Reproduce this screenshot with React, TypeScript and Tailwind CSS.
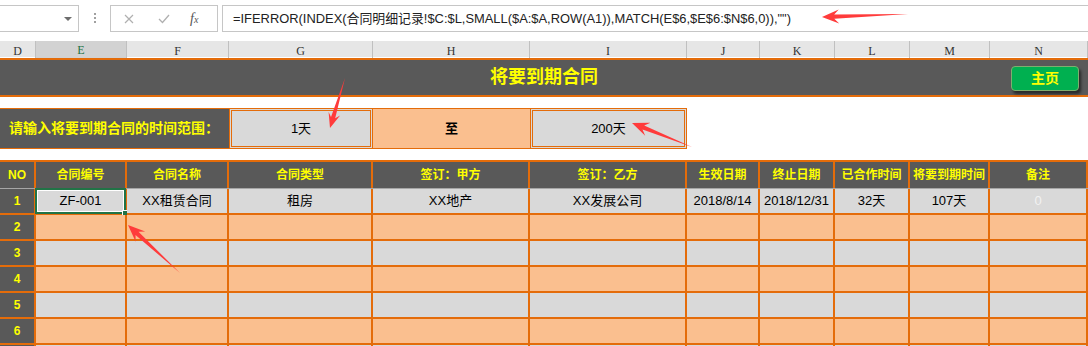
import React from "react";

const cols = [36, 91, 102, 144, 157, 157, 73, 75, 75, 80, 98];
const letters = ["D", "E", "F", "G", "H", "I", "J", "K", "L", "M", "N"];
const heads = ["NO", "合同编号", "合同名称", "合同类型", "签订：甲方", "签订：乙方", "生效日期", "终止日期", "已合作时间", "将要到期时间", "备注"];
const row1 = ["ZF-001", "XX租赁合同", "租房", "XX地产", "XX发展公司", "2018/8/14", "2018/12/31", "32天", "107天", "0"];

const gridCols = "grid grid-cols-[36px_91px_102px_144px_157px_157px_73px_75px_75px_80px_98px]";

function arrowPoints(tx: number, ty: number, sx: number, sy: number, H = 17, W = 7) {
  const dx = tx - sx;
  const dy = ty - sy;
  const len = Math.hypot(dx, dy);
  const ux = dx / len;
  const uy = dy / len;
  const px = -uy;
  const py = ux;
  const b = H * 0.72;
  const pts = [
    [sx, sy],
    [tx - ux * b + px * 2.2, ty - uy * b + py * 2.2],
    [tx - ux * H + px * W, ty - uy * H + py * W],
    [tx, ty],
    [tx - ux * H - px * W, ty - uy * H - py * W],
    [tx - ux * b - px * 2.2, ty - uy * b - py * 2.2],
  ];
  return pts.map((p) => p[0].toFixed(1) + "," + p[1].toFixed(1)).join(" ");
}

function FormulaBar() {
  return (
    <div className="flex h-[41px] items-start pt-[5px] bg-white">
      <div className="relative h-[27px] w-[79px] border-y border-r border-[#c6c6c6] bg-white">
        <div className="absolute left-[64px] top-[11px] h-0 w-0 border-x-[4px] border-t-[4px] border-x-transparent border-t-[#6d6d6d]" />
      </div>
      <div className="flex w-[31px] flex-col items-center gap-[2px] pt-[8px]">
        <span className="h-[2px] w-[2px] bg-[#a0a0a0]" />
        <span className="h-[2px] w-[2px] bg-[#a0a0a0]" />
        <span className="h-[2px] w-[2px] bg-[#a0a0a0]" />
      </div>
      <div className="flex h-[27px] w-[108px] items-center border border-[#c6c6c6] bg-white text-[#b5b5b5]">
        <svg className="ml-[13px]" width="10" height="10" viewBox="0 0 10 10">
          <path d="M1 1L9 9M9 1L1 9" stroke="#b0b0b0" strokeWidth="1.2" fill="none" />
        </svg>
        <svg className="ml-[24px]" width="12" height="10" viewBox="0 0 12 10">
          <path d="M1 5L4.5 8.5L11 1" stroke="#b0b0b0" strokeWidth="1.3" fill="none" />
        </svg>
        <span className="ml-[20px] font-['Liberation_Serif',serif] text-[14px] italic text-[#555]">
          f<span className="text-[10px]">x</span>
        </span>
      </div>
      <div className="ml-[4px] flex h-[27px] flex-1 items-center border-y border-l border-[#c6c6c6] bg-white pl-[10px] text-[12.9px] text-[#222] whitespace-nowrap">
        =IFERROR(INDEX(合同明细记录!$C:$L,SMALL($A:$A,ROW(A1)),MATCH(E$6,$E$6:$N$6,0)),"")
      </div>
    </div>
  );
}

function ColumnLetters() {
  return (
    <div className={gridCols + " h-[16px] bg-[#e6e6e6]"}>
      {letters.map((l, i) => (
        <div
          key={l}
          className={
            "flex items-center justify-center border-r border-[#c0c0c0] font-['Liberation_Serif',serif] text-[12px] " +
            (i === 1 ? "bg-[#d2d2d2] border-b-2 border-b-[#217346] text-[#217346]" : "text-[#333]")
          }
        >
          {l}
        </div>
      ))}
    </div>
  );
}

export default function App() {
  return (
    <div className="relative h-[346px] w-[1088px] overflow-hidden bg-white font-['Liberation_Sans','Noto_Sans_CJK_SC',sans-serif]">
      <FormulaBar />
      <ColumnLetters />

      {/* title */}
      <div className="relative mt-[1px] flex h-[39px] items-center justify-center border-y-2 border-[#e46c0a] bg-[#595959]">
        <span className="text-[18px] font-bold text-[#ffff00]">将要到期合同</span>
        <div className="absolute right-[9px] top-[6px] flex h-[25px] w-[68px] items-center justify-center rounded-[4px] border border-[#7fae6f] bg-[#00b050] text-[14px] font-bold text-[#ffff00] shadow-[2px_3px_3px_rgba(0,0,0,0.55)]">
          主页
        </div>
      </div>

      {/* range input */}
      <div className="mt-[11px] flex h-[41px]">
        <div className="flex w-[229px] items-center border-y border-[#e46c0a] bg-[#595959] pl-[9px] text-[14px] font-bold text-[#ffff00]">
          请输入将要到期合同的时间范围：
        </div>
        <div className="flex w-[144px] items-center justify-center border-[3px] border-double border-[#e46c0a] bg-[#d9d9d9] text-[13px] text-black">
          1天
        </div>
        <div className="flex w-[157px] items-center justify-center border-y border-[#e46c0a] bg-[#fabf8f] text-[13px] font-bold text-black">
          至
        </div>
        <div className="flex w-[157px] items-center justify-center border-[3px] border-double border-[#e46c0a] bg-[#d9d9d9] text-[13px] text-black">
          200天
        </div>
      </div>

      {/* table */}
      <div className="mt-[11px] border-t-2 border-[#e46c0a]">
        <div className={gridCols + " h-[26px] bg-[#595959]"}>
          {heads.map((h) => (
            <div key={h} className="flex items-center justify-center border-r-2 border-[#e46c0a] text-[12px] font-bold text-[#ffff00]">
              {h}
            </div>
          ))}
        </div>
        {[1, 2, 3, 4, 5, 6, 7].map((n) => (
          <div key={n} className={gridCols + (n === 1 ? " h-[27px] border-t border-[#a6a6a6]" : " h-[26px]")}>
            <div className="flex items-center justify-center border-b-2 border-r-2 border-[#e46c0a] bg-[#595959] text-[12px] font-bold text-[#ffff00]">
              {n < 7 ? n : ""}
            </div>
            {cols.slice(1).map((_, i) => (
              <div
                key={i}
                className={
                  "relative flex items-center justify-center border-b-2 border-r-2 border-[#e46c0a] text-[13px] " +
                  (n % 2 === 1 ? "bg-[#d9d9d9] " : "bg-[#fabf8f] ") +
                  (i === 9 ? "text-[#f2f2f2]" : "text-black")
                }
              >
                {n === 1 ? row1[i] : ""}
                {n === 1 && i === 0 && (
                  <div className="absolute inset-[-1px] border-2 border-[#217346]">
                    <div className="absolute inset-0 border border-white" />
                    <div className="absolute bottom-[-4px] right-[-4px] h-[6px] w-[6px] border border-white bg-[#217346]" />
                  </div>
                )}
              </div>
            ))}
          </div>
        ))}
      </div>

      <svg className="pointer-events-none absolute left-0 top-0" width="1088" height="346">
        <polygon points={arrowPoints(822, 17, 908, 14)} fill="#ff3b3b" />
        <polygon points={arrowPoints(330, 128, 345, 78, 15, 6)} fill="#ff3b3b" />
        <polygon points={arrowPoints(632, 123, 692, 147)} fill="#ff3b3b" />
        <polygon points={arrowPoints(128, 225, 180, 273)} fill="#ff3b3b" />
      </svg>
    </div>
  );
}
